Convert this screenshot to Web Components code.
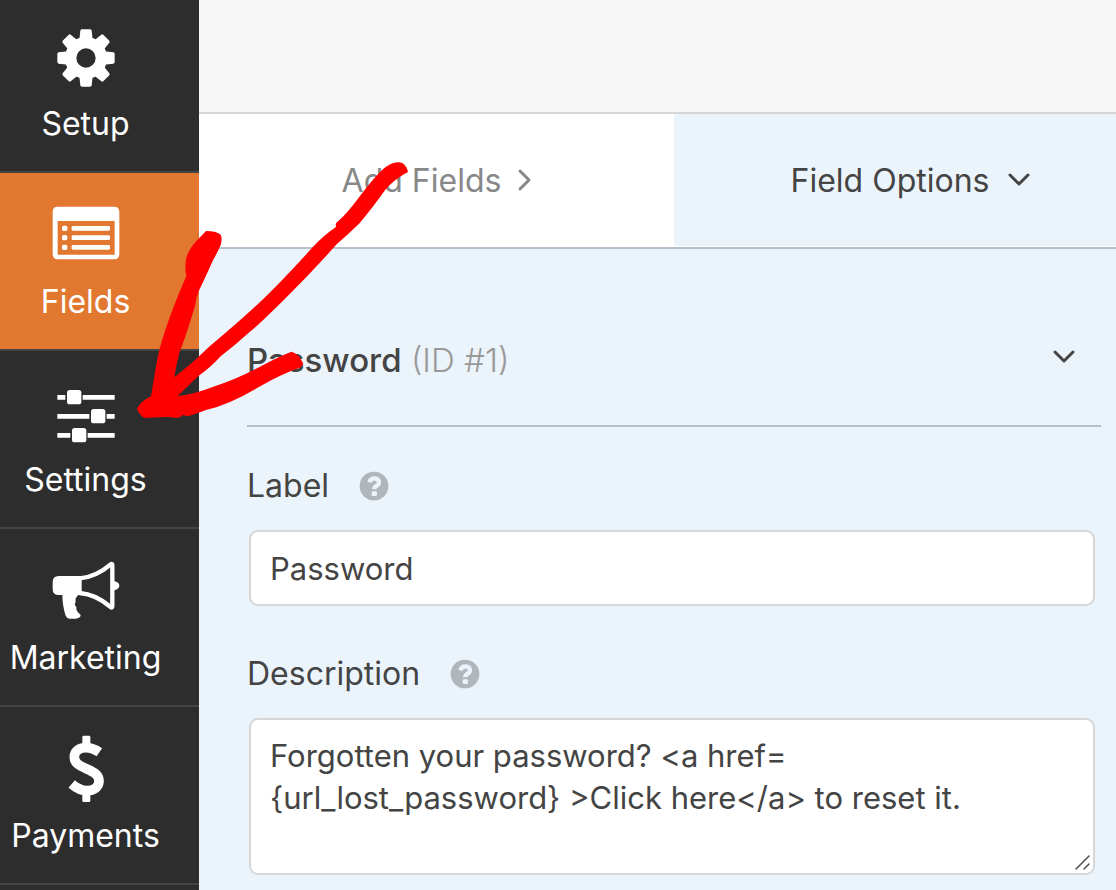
<!DOCTYPE html>
<html lang="en">
<head>
<meta charset="utf-8">
<title>Form builder</title>
<style>
  html, body { margin: 0; }
  body {
    font-family: Inter, "Open Sans", sans-serif;
    font-size: 32px;
    line-height: 40px;
    color: #444;
    background: #ebf3fb;
  }
</style>
</head>
<body>
<form-builder></form-builder>

<script>
const define = (name, html) => {
  const template = document.createElement('template');
  template.innerHTML = html;
  customElements.define(name, class extends HTMLElement {
    constructor() {
      super();
      this.attachShadow({ mode: 'open' }).append(template.content.cloneNode(true));
    }
  });
};

/* Sidebar entry: icon above its name */
define('nav-item', `
<style>
  :host { display: block; border-bottom: 2px solid #444; background: #2d2d2d; color: #fff; }
  :host([active]) { background: #e27730; }
  button {
    display: flex; flex-direction: column; align-items: center; gap: 11px;
    width: 100%; box-sizing: border-box; padding: 28px 28px 27px 0;
    border: 0; background: none; color: inherit; font: inherit; white-space: nowrap; cursor: pointer;
  }
  :host([first]) button { padding-top: 22px; gap: 12px; }
  ::slotted(svg) { display: block; width: 70px; height: 70px; }
  span { display: flex; justify-content: center; width: 100%; }
</style>
<button type="button"><slot name="icon"></slot><span><slot></slot></span></button>`);

define('side-nav', `
<style>
  :host { display: block; background: #2d2d2d; }
  svg { fill: #fff; }
</style>
<nav aria-label="Builder">
  <nav-item first>
    <svg slot="icon" viewBox="0 0 210 210" aria-hidden="true">
      <defs><path id="tooth" d="M84 62 L88 26 Q89 22 93 22 H117 Q121 22 122 26 L126 62z"/></defs>
      <use href="#tooth"/><use href="#tooth" transform="rotate(45 105 108)"/>
      <use href="#tooth" transform="rotate(90 105 108)"/><use href="#tooth" transform="rotate(135 105 108)"/>
      <use href="#tooth" transform="rotate(180 105 108)"/><use href="#tooth" transform="rotate(225 105 108)"/>
      <use href="#tooth" transform="rotate(270 105 108)"/><use href="#tooth" transform="rotate(315 105 108)"/>
      <circle cx="105" cy="108" r="46" fill="none" stroke="#fff" stroke-width="34"/>
    </svg>Setup</nav-item>
  <nav-item active>
    <svg slot="icon" viewBox="0 0 210 210" aria-hidden="true">
      <path fill-rule="evenodd" d="M21 17H189Q205 17 205 33V159Q205 175 189 175H21Q5 175 5 159V33Q5 17 21 17zM20 60V161H191V60z"/>
      <rect x="33" y="74" width="16" height="16" rx="5"/><rect x="62" y="75" width="115" height="14" rx="4"/>
      <rect x="33" y="102" width="16" height="16" rx="5"/><rect x="62" y="103" width="115" height="14" rx="4"/>
      <rect x="33" y="131" width="16" height="16" rx="5"/><rect x="62" y="132" width="115" height="14" rx="4"/>
    </svg>Fields</nav-item>
  <nav-item>
    <svg slot="icon" viewBox="0 0 210 210" aria-hidden="true">
      <path d="M19 48H43V62H19zM95 48H191V62H95zM19 105H115V119H19zM167 105H191V119H167zM19 162H58V176H19zM110 162H191V176H110z"/>
      <rect x="48" y="33" width="43" height="43" rx="8"/>
      <rect x="120" y="90" width="43" height="43" rx="8"/>
      <rect x="63" y="147" width="43" height="43" rx="8"/>
    </svg>Settings</nav-item>
  <nav-item>
    <svg slot="icon" viewBox="0 0 210 210" aria-hidden="true">
      <path d="M23 57H92V114H23Q5 114 5 96V75Q5 57 23 57z"/>
      <path d="M86 64Q135 60 179 22Q184 18 184 26V146Q184 154 179 150Q135 112 86 108" fill="none" stroke="#fff" stroke-width="13" stroke-linejoin="round"/>
      <path d="M188 72Q205 76 205 86Q205 96 188 100z"/>
      <path d="M34 110H88Q70 120 74 136Q68 142 76 150Q74 162 87 172Q92 178 84 182Q72 187 56 185Q47 184 44 176Q34 146 34 110z"/>
    </svg>Marketing</nav-item>
  <nav-item>
    <svg slot="icon" viewBox="0 0 210 210" aria-hidden="true">
      <path d="M98 2H114Q118 2 118 6V32H94V6Q94 2 98 2zM94 172H118V197Q118 201 114 201H98Q94 201 94 197z"/>
      <path d="M145 52C132 43 118 38 105 38C84 38 70 49 70 66C70 84 84 92 106 101C132 112 144 121 144 138C144 156 128 167 108 167C92 167 77 160 62 147" fill="none" stroke="#fff" stroke-width="29"/>
    </svg>Payments</nav-item>
</nav>`);

define('chevron-icon', `
<style>
  :host { display: block; width: 24px; height: 24px; }
  :host([right]) svg { rotate: -90deg; }
  svg { display: block; }
</style>
<svg width="24" height="24" viewBox="0 0 24 24" fill="none" stroke="currentColor" stroke-width="3" stroke-linecap="round" stroke-linejoin="round" aria-hidden="true"><path d="M3 7L12 16L21 7"/></svg>`);

define('panel-tabs', `
<style>
  :host { display: grid; grid-template-columns: 475fr 442fr; background: #fff; border-bottom: 2px solid #b6bfc9; }
  button {
    display: flex; align-items: center; justify-content: center; gap: 18px;
    height: 132px; margin: 0 0 1px; padding: 2px 0 0; border: 0; background: #fff; color: #888;
    font: inherit; white-space: nowrap; cursor: pointer;
  }
  .active { background: #ebf3fb; color: #444; padding-left: 30px; }
  chevron-icon { margin: -2px -2px 0 0; }
  chevron-icon[right] { margin: -2px -6px 0; }
</style>
<button type="button">Add Fields<chevron-icon right></chevron-icon></button>
<button type="button" class="active">Field Options<chevron-icon></chevron-icon></button>`);

define('group-heading', `
<style>
  :host { display: block; border-bottom: 2px solid #b6bfc9; font-size: 33px; }
  button {
    display: flex; align-items: center; justify-content: space-between;
    width: 100%; padding: 91px 25px 45px 0; border: 0; background: none;
    color: inherit; font: inherit; text-align: left; cursor: pointer;
  }
  b { font-weight: 500; }
  small { font-size: inherit; color: #999; font-weight: 300; }
  chevron-icon { margin-top: -6px; }
</style>
<button type="button"><span><b><slot></slot></b> <small><slot name="id"></slot></small></span><chevron-icon></chevron-icon></button>`);

define('help-icon', `
<style>:host { display: block; } svg { display: block; }</style>
<svg width="30" height="30" viewBox="0 0 90 90" role="img" aria-label="Help">
  <circle cx="45" cy="45" r="43" fill="#b0b6bc"/>
  <path d="M31 34Q35 22 46 22Q60 23 60 34Q60 41 52 45Q46 48 46 55" fill="none" stroke="#ebf3fb" stroke-width="13"/>
  <rect x="38" y="61" width="16" height="14" rx="4" fill="#ebf3fb"/>
</svg>`);

const fieldStyle = `
<style>
  :host { display: block; }
  .head { display: flex; align-items: center; gap: 30px; margin-bottom: 24px; }
  .box { position: relative; margin: 0 6px 0 2px; }
  input, textarea {
    display: block; width: 100%; box-sizing: border-box; margin: 0;
    border: 2px solid #d6d6d6; border-radius: 9px; background: #fff; outline: 0;
    color: inherit; font: inherit; font-size: 31px;
  }
  input { height: 76px; padding: 0 19px; }
  textarea { height: 157px; padding: 15px 19px; line-height: 42px; resize: none; overflow: hidden; }
  .grip { position: absolute; right: 4px; bottom: 4px; pointer-events: none; }
</style>`;

define('text-field', fieldStyle + `
<div class="head"><label for="f">Label</label><help-icon></help-icon></div>
<div class="box"><input id="f" type="text" value="Password"></div>`);

define('description-field', fieldStyle + `
<div class="head"><label for="f">Description</label><help-icon></help-icon></div>
<div class="box">
  <textarea id="f">Forgotten your password? &lt;a href={url_lost_password} &gt;Click here&lt;/a&gt; to reset it.</textarea>
  <svg class="grip" width="16" height="16" viewBox="0 0 16 16" stroke="#555" stroke-width="1.6" stroke-linecap="round" aria-hidden="true"><path d="M1 14L14 1M9 14L14 9"/></svg>
</div>`);

/* Hand-drawn arrow that points at the Settings entry */
define('arrow-mark', `
<style>
  :host { position: absolute; left: 130px; top: 140px; pointer-events: none; }
  svg { display: block; }
</style>
<svg width="300" height="290" viewBox="0 0 900 870" fill="#f00" aria-hidden="true">
  <path d="M228 273Q262 274 272 284Q277 292 273 313Q265 332 249 361Q227 411 206 454Q198 474 196 494Q171 580 148 638Q136 690 133 712Q190 668 240 618Q324 548 384 492Q455 425 545 325Q580 286 618 261Q614 249 625 243Q650 222 690 168Q740 101 768 80Q798 61 817 69Q831 79 834 96Q796 115 766 149Q724 208 687 251Q655 282 620 313Q545 397 474 467Q393 548 358 577Q314 617 272 649Q238 686 205 708Q168 744 143 768Q194 762 250 740Q320 718 390 680Q455 645 485 635Q506 640 520 671Q516 681 505 685Q460 700 388 740Q300 793 228 810Q190 825 170 829L160 825Q150 835 137 834Q115 829 94 832Q65 832 45 834Q28 826 21 806Q33 783 63 769Q70 725 83 650Q105 555 169 408Q164 385 168 357Q176 326 202 300Z"/>
</svg>`);

define('form-builder', `
<style>
  :host { position: relative; display: grid; grid-template-columns: 199px 1fr; min-height: 100vh; overflow: hidden; }
  main { min-width: 0; }
  header { height: 112px; background: #f6f6f6; border-bottom: 2px solid #d6d6d6; }
  form { padding: 0 15px 16px 48px; }
  text-field { margin-top: 39px; }
  description-field { margin-top: 48px; }
</style>
<side-nav></side-nav>
<main>
  <header></header>
  <panel-tabs></panel-tabs>
  <form>
    <group-heading>Password<span slot="id">(ID #1)</span></group-heading>
    <text-field></text-field>
    <description-field></description-field>
  </form>
</main>
<arrow-mark></arrow-mark>`);
</script>
</body>
</html>
